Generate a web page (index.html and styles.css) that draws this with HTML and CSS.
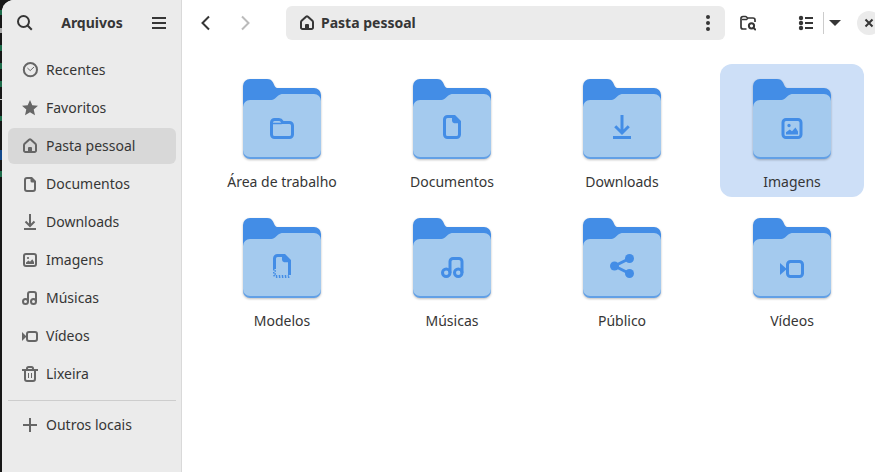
FILE: index.html
```html
<!DOCTYPE html>
<html lang="pt-BR">
<head>
<meta charset="utf-8">
<title>Arquivos</title>
<link rel="stylesheet" href="styles.css">
</head>
<body>
<svg class="defs" aria-hidden="true">
  <symbol id="search" viewBox="0 0 16 16"><circle cx="6.500" cy="6.500" r="5.500" class="s"/><path d="M10.500 10.500l4.300 4.300" class="s"/></symbol>
  <symbol id="menu" viewBox="0 0 16 16"><path d="M1 3h14M1 8h14M1 13h14" class="s"/></symbol>
  <symbol id="back" viewBox="0 0 16 16"><path d="M12 1.500L5.500 8l6.500 6.500" class="s"/></symbol>
  <symbol id="forward" viewBox="0 0 16 16"><path d="M5 1.500L11.500 8 5 14.500" class="s"/></symbol>
  <symbol id="recent" viewBox="0 0 16 16"><circle cx="8.400" cy="7.700" r="6.600" class="s"/><path d="M5.400 6l2.800 2.600L12 5" class="s t"/></symbol>
  <symbol id="star" viewBox="0 0 16 16"><path d="M8 0l2.300 5.300 5.700.4-4.300 3.800L13 15.300l-5-3-5 3 1.300-5.800L0 5.700l5.700-.4z"/></symbol>
  <symbol id="home" viewBox="0 0 16 16"><path d="M2 7.200v5.300A1.500 1.500 0 0 0 3.500 14h9a1.500 1.500 0 0 0 1.500-1.500V7.200c0-.6-.2-1-.6-1.400L8.700 1.600a1 1 0 0 0-1.400 0L2.600 5.800c-.4.4-.6.800-.6 1.400z" class="s"/><path d="M6 15v-5a1 1 0 0 1 1-1h2a1 1 0 0 1 1 1v5z"/></symbol>
  <symbol id="doc" viewBox="0 0 16 16"><path d="M9.600 1H5a2 2 0 0 0-2 2v10a2 2 0 0 0 2 2h6a2 2 0 0 0 2-2V4.400z" class="s"/><path d="M8 1v3a2 2 0 0 0 1.500 1.500H13L9.500 1z"/></symbol>
  <symbol id="doc-small" viewBox="0 0 16 16"><path d="M9.600 2H5a2 2 0 0 0-2 2v9a2 2 0 0 0 2 2h6a2 2 0 0 0 2-2V5.400z" class="s"/><path d="M8.500 2v3a1.500 1.500 0 0 0 1.500 1.500h3L9.500 2z"/></symbol>
  <symbol id="template" viewBox="0 0 16 16"><path d="M3 10V3a2 2 0 0 1 2-2h4.600L13 4.400V14" class="s"/><path d="M8 1v3a2 2 0 0 0 1.500 1.500H13L9.500 1z"/><path d="M2.500 10v3.500a2 2 0 0 0 2 2H13M3.500 10.800V14.500h9" class="s dots"/></symbol>
  <symbol id="download" viewBox="0 0 16 16"><path d="M8 0v11M3.500 7.500L8 12l4.500-4.500M2 15h12" class="s"/></symbol>
  <symbol id="image" viewBox="0 0 16 16"><rect x="2" y="2" width="12" height="12" rx="2" class="s"/><circle cx="6" cy="6" r="1.100"/><path d="M4 12v-1.500L6.500 8.600 8 9.800l2.300-2.500L12 10v2z"/></symbol>
  <symbol id="music" viewBox="1 1 16 16"><circle cx="4.500" cy="12.500" r="2.500" class="s"/><circle cx="12.500" cy="12.500" r="2.500" class="s"/><path d="M7 12.500V5a2 2 0 0 1 2-2h4a2 2 0 0 1 2 2v7.500" class="s"/></symbol>
  <symbol id="video" viewBox="0 1 16 16"><rect x="5" y="5" width="10" height="10" rx="2" class="s"/><path d="M0 6l4.500 4L0 14z"/></symbol>
  <symbol id="video-small" viewBox="0 1 16 16"><rect x="5" y="5" width="10" height="9" rx="2" class="s"/><path d="M0 5l4.500 4.500L0 14z"/></symbol>
  <symbol id="trash" viewBox="0 0 16 16"><path d="M0 4h16M5 4V2.500A1.500 1.500 0 0 1 6.500 1h3A1.500 1.500 0 0 1 11 2.500V4M3 4v9a2 2 0 0 0 2 2h6a2 2 0 0 0 2-2V4" class="s"/><path d="M6.500 7v5M9.500 7v5" class="s t"/></symbol>
  <symbol id="plus" viewBox="0 0 16 16"><path d="M8 1v14M1 8h14" class="s"/></symbol>
  <symbol id="share" viewBox="0 0 16 16"><circle cx="3" cy="8" r="3"/><circle cx="13" cy="3" r="3"/><circle cx="13" cy="13" r="3"/><path d="M13 3L3 8l10 5" class="s"/></symbol>
  <symbol id="folder" viewBox="0 0 16 16"><path d="M1 5a2 2 0 0 1 2-2h3c1 0 1.600.4 2 1.200l.4.800H13a2 2 0 0 1 2 2v6a2 2 0 0 1-2 2H3a2 2 0 0 1-2-2z" class="s"/><path d="M2 5.600h5.500l1-1" class="s t"/></symbol>
  <symbol id="folder-search" viewBox="0 0 16 16"><path d="M6.500 14H3a2 2 0 0 1-2-2V3.500a2 2 0 0 1 2-2h2.500c1 0 1.500 1.500 2.500 1.500h5a2 2 0 0 1 2 2v2M2 4.500h4.500L8 3" class="s m"/><circle cx="11.500" cy="10.800" r="2.600" class="s"/><path d="M13.200 12.500l2.600 2.600" class="s"/></symbol>
  <symbol id="dots" viewBox="0 0 16 16"><circle cx="8" cy="2" r="2"/><circle cx="8" cy="8" r="2"/><circle cx="8" cy="14" r="2"/></symbol>
  <symbol id="list" viewBox="0 0 16 16"><circle cx="3" cy="3" r="2.200"/><circle cx="3" cy="8" r="2.200"/><circle cx="3" cy="13" r="2.200"/><path d="M7 3h8M7 8h8M7 13h8" class="s"/></symbol>
  <symbol id="caret" viewBox="0 0 16 16"><path d="M2 5h12l-6 6z"/></symbol>
  <symbol id="close" viewBox="0 0 16 16"><path d="M4.500 4.500l7 7M11.500 4.500l-7 7" class="s"/></symbol>
  <symbol id="base" viewBox="0 0 80 82">
    <path class="folder-back" d="M1 7a7 7 0 0 1 7-7h17c3 0 4.800 1 6 3.500l1.500 3.200C33.300 8.300 34.300 9 36 9h36a7 7 0 0 1 7 7v50H1z"/>
    <path class="folder-edge" d="M1 60h78v13a7 7 0 0 1-7 7H8a7 7 0 0 1-7-7z"/>
    <path class="folder-front" d="M1 28a7 7 0 0 1 7-7h20c2 0 3.500-.4 5-1.600l3-2.600c1.500-1.300 3.200-1.800 5-1.800h31a7 7 0 0 1 7 7v49a7 7 0 0 1-7 7H8a7 7 0 0 1-7-7z"/>
  </symbol>
</svg>
<div class="window">
  <aside class="sidebar">
    <header class="side-header">
      <button class="tool" aria-label="Pesquisar"><svg class="icon"><use href="#search"/></svg></button>
      <h1>Arquivos</h1>
      <button class="tool" aria-label="Menu"><svg class="icon"><use href="#menu"/></svg></button>
    </header>
    <nav class="places">
      <a href="#"><svg class="icon"><use href="#recent"/></svg>Recentes</a>
      <a href="#"><svg class="icon"><use href="#star"/></svg>Favoritos</a>
      <a href="#" class="current"><svg class="icon"><use href="#home"/></svg>Pasta pessoal</a>
      <a href="#"><svg class="icon"><use href="#doc-small"/></svg>Documentos</a>
      <a href="#"><svg class="icon"><use href="#download"/></svg>Downloads</a>
      <a href="#"><svg class="icon"><use href="#image"/></svg>Imagens</a>
      <a href="#"><svg class="icon"><use href="#music"/></svg>Músicas</a>
      <a href="#"><svg class="icon"><use href="#video-small"/></svg>Vídeos</a>
      <a href="#"><svg class="icon"><use href="#trash"/></svg>Lixeira</a>
      <hr>
      <a href="#"><svg class="icon"><use href="#plus"/></svg>Outros locais</a>
    </nav>
  </aside>
  <main>
    <header class="toolbar">
      <button class="tool" aria-label="Voltar"><svg class="icon"><use href="#back"/></svg></button>
      <button class="tool" aria-label="Avançar" disabled><svg class="icon"><use href="#forward"/></svg></button>
      <div class="pathbar">
        <button class="crumb"><svg class="icon"><use href="#home"/></svg>Pasta pessoal</button>
        <button class="tool" aria-label="Opções da pasta"><svg class="icon"><use href="#dots"/></svg></button>
      </div>
      <button class="tool" aria-label="Pesquisar na pasta"><svg class="icon"><use href="#folder-search"/></svg></button>
      <div class="view">
        <button class="tool" aria-label="Lista"><svg class="icon"><use href="#list"/></svg></button>
        <button class="tool narrow" aria-label="Opções de exibição"><svg class="icon"><use href="#caret"/></svg></button>
      </div>
      <button class="close" aria-label="Fechar"><svg class="icon"><use href="#close"/></svg></button>
    </header>
    <div class="files">
      <button class="file"><svg class="folder" viewBox="0 0 80 82"><use href="#base"/><use class="emblem" href="#folder" x="28" y="36" width="24" height="24"/></svg>Área de trabalho</button>
      <button class="file"><svg class="folder" viewBox="0 0 80 82"><use href="#base"/><use class="emblem" href="#doc" x="28" y="36" width="24" height="24"/></svg>Documentos</button>
      <button class="file"><svg class="folder" viewBox="0 0 80 82"><use href="#base"/><use class="emblem" href="#download" x="28" y="36" width="24" height="24"/></svg>Downloads</button>
      <button class="file selected"><svg class="folder" viewBox="0 0 80 82"><use href="#base"/><use class="emblem" href="#image" x="28" y="37.500" width="24" height="24"/></svg>Imagens</button>
      <button class="file"><svg class="folder" viewBox="0 0 80 82"><use href="#base"/><use class="emblem" href="#template" x="28" y="36" width="24" height="24"/></svg>Modelos</button>
      <button class="file"><svg class="folder" viewBox="0 0 80 82"><use href="#base"/><use class="emblem" href="#music" x="29" y="37.500" width="24" height="24"/></svg>Músicas</button>
      <button class="file"><svg class="folder" viewBox="0 0 80 82"><use href="#base"/><use class="emblem" href="#share" x="28" y="36" width="24" height="24"/></svg>Público</button>
      <button class="file"><svg class="folder" viewBox="0 0 80 82"><use href="#base"/><use class="emblem" href="#video" x="28" y="37.500" width="24" height="24"/></svg>Vídeos</button>
    </div>
  </main>
</div>
</body>
</html>
```
FILE: styles.css
```css
* { box-sizing: border-box; }

body {
  margin: 0;
  padding-left: 2px;
  overflow: hidden;
  /* sliver of the terminal window behind the file manager */
  background: linear-gradient(#171717 10px, #1d6b4a 10px 15px, #171717 15px 28px, #aaa 28px 33px, #171717 33px 45px,
    #1d6b4a 45px 51px, #171717 51px 63px, #1d6b4a 63px 69px, #171717 69px 81px, #1d6b4a 81px 87px,
    #171717 87px 99px, #ccc 99px 100px, #171717 100px 116px, #1d6b4a 116px 121px, #171717 121px 150px,
    #12488b 150px 160px, #171717 160px 171px, #1d6b4a 171px 177px, #171717 177px);
  color: #363636;
  font: 14px/20px "Noto Sans", sans-serif;
}

button {
  padding: 0;
  border: 0;
  background: none;
  color: inherit;
  font: inherit;
}

.defs { position: absolute; width: 0; height: 0; }
.s { fill: none; stroke: currentColor; stroke-width: 2; }
.m { stroke-width: 1.7; }
.t { stroke-width: 1; }
.dots { stroke-width: 1; stroke-dasharray: 1 1; }

.icon {
  flex: none;
  width: 16px;
  height: 16px;
  fill: currentColor;
}

.window {
  display: flex;
  min-height: 100vh;
  border-top-left-radius: 12px;
  overflow: hidden;
  background: #fff;
}

.sidebar {
  flex: none;
  width: 180px;
  border-right: 1px solid #d9d9d9;
  background: #ebebeb;
}

.side-header {
  display: flex;
  align-items: center;
  justify-content: space-between;
  height: 46px;
  padding: 0 5px 0 6px;
}

h1 {
  margin: 0;
  font-size: 14px;
  font-weight: 700;
}

.tool {
  display: flex;
  flex: none;
  align-items: center;
  justify-content: center;
  width: 34px;
  height: 34px;
}
.tool:disabled { color: #bbb; }

.places {
  display: flex;
  flex-direction: column;
  gap: 2px;
  padding: 6px 5px 6px 6px;
}

.places a {
  display: flex;
  align-items: center;
  gap: 8px;
  height: 36px;
  padding: 0 14px;
  border-radius: 6px;
  color: inherit;
  text-decoration: none;
}
.places .icon { color: #666; }
.places .current { background: #d8d8d8; }

hr {
  width: 100%;
  height: 1px;
  margin: 6px 0 4px;
  border: 0;
  background: #cdcdcd;
}

main { flex: 1; min-width: 0; }

.toolbar {
  display: flex;
  align-items: center;
  gap: 6px;
  height: 46px;
  margin-right: -6px;
  padding-left: 6px;
}

.pathbar {
  display: flex;
  flex: 1;
  align-items: center;
  justify-content: space-between;
  margin-left: 18px;
  border-radius: 6px;
  background: #ebebeb;
}

.crumb {
  display: flex;
  align-items: center;
  gap: 6px;
  padding-left: 13px;
  font-weight: 700;
}

.view {
  display: flex;
  align-items: center;
  margin-left: 18px;
  margin-right: 5px;
}
.narrow {
  width: 23px;
  height: 22px;
  border-left: 1px solid #ccc;
}

.close {
  display: flex;
  align-items: center;
  justify-content: center;
  width: 24px;
  height: 24px;
  border-radius: 50%;
  background: #ebebeb;
}

.files {
  display: grid;
  grid-template-columns: repeat(4, 1fr);
  gap: 6px 26px;
  padding: 18px 11px 18px 28px;
}

.file {
  display: flex;
  flex-direction: column;
  align-items: center;
  gap: 11px;
  padding: 15px 0 5px;
  border-radius: 12px;
}
.selected { background: #cddff7; }

.folder {
  width: 80px;
  height: 82px;
  overflow: visible;
  filter: drop-shadow(0 1px 1px rgb(0 0 0 / 25%));
}
.folder-back { fill: #438de6; }
.folder-edge { fill: #62a0e6; }
.folder-front { fill: #a4caee; }
.emblem { color: #438de6; fill: #438de6; }
```
